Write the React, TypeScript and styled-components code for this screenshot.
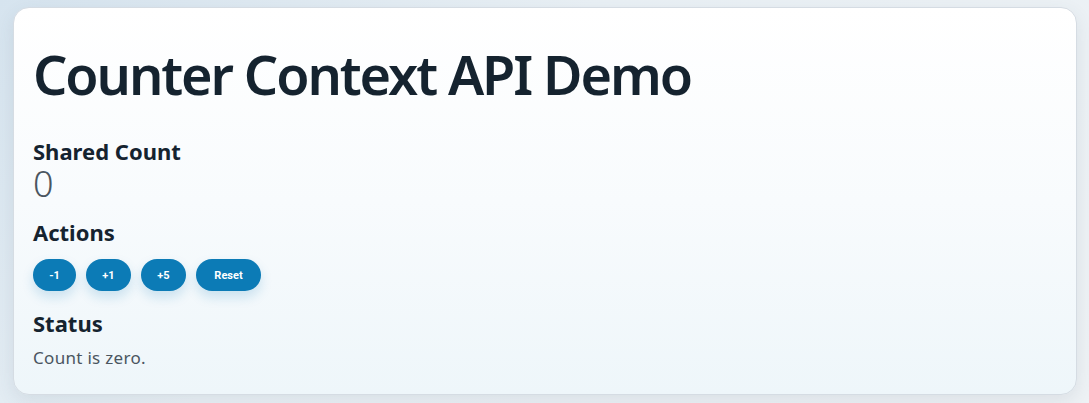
import React, { useState } from "react";
import styled, { createGlobalStyle } from "styled-components";

const Global = createGlobalStyle`
  html, body { margin: 0; padding: 0; }
  body {
    background: linear-gradient(135deg, #d6e4ef 0%, #e9f0f5 40%, #eef2f5 100%);
    min-height: 403px;
    font-family: "Noto Sans", "DejaVu Sans", sans-serif;
  }
`;

const Page = styled.div`
  padding: 7px 12px 8px 13px;
  box-sizing: border-box;
`;

const Card = styled.main`
  box-sizing: border-box;
  height: 388px;
  border-radius: 16px;
  border: 1px solid #d5dce3;
  background: linear-gradient(180deg, #ffffff 0%, #f8fbfd 50%, #eef6fa 100%);
  box-shadow: 0 6px 18px rgba(60, 80, 100, 0.10);
  padding: 34px 20px 20px 19px;
  color: #14222f;
`;

const Title = styled.h1`
  margin: 0 0 32px 0;
  font-size: 54px;
  line-height: 64px;
  font-weight: 600;
  letter-spacing: -2.1px;
  color: #15232f;
`;

const SectionTitle = styled.h2`
  margin: 0;
  font-size: 22px;
  line-height: 26px;
  font-weight: 700;
  color: #15232f;
`;

const Count = styled.div`
  font-size: 36px;
  line-height: 40px;
  font-weight: 300;
  color: #4a5560;
  margin-bottom: 15px;
`;

const ButtonRow = styled.div`
  display: flex;
  gap: 10px;
  margin-top: 14px;
  margin-bottom: 19px;
`;

const Button = styled.button<{ $w: number }>`
  width: ${(p) => p.$w}px;
  height: 32px;
  border: none;
  border-radius: 16px;
  background: #0c7bb6;
  color: #ffffff;
  font-family: Roboto, "Liberation Sans", sans-serif;
  font-size: 11px;
  font-weight: 700;
  box-shadow: 0 6px 12px rgba(12, 123, 182, 0.18);
  cursor: pointer;
  padding: 0;
`;

const StatusText = styled.p`
  margin: 10px 0 0 0;
  font-size: 17px;
  line-height: 24px;
  letter-spacing: 0.3px;
  color: #4a5560;
`;

export default function App() {
  const [count, setCount] = useState(0);
  return (
    <>
      <Global />
      <Page>
        <Card>
          <Title>Counter Context API Demo</Title>
          <SectionTitle>Shared Count</SectionTitle>
          <Count>{count}</Count>
          <SectionTitle>Actions</SectionTitle>
          <ButtonRow>
            <Button $w={43} onClick={() => setCount((c) => c - 1)}>-1</Button>
            <Button $w={45} onClick={() => setCount((c) => c + 1)}>+1</Button>
            <Button $w={45} onClick={() => setCount((c) => c + 5)}>+5</Button>
            <Button $w={65} onClick={() => setCount(0)}>Reset</Button>
          </ButtonRow>
          <SectionTitle>Status</SectionTitle>
          <StatusText>
            {count === 0 ? "Count is zero." : count > 0 ? "Count is positive." : "Count is negative."}
          </StatusText>
        </Card>
      </Page>
    </>
  );
}
